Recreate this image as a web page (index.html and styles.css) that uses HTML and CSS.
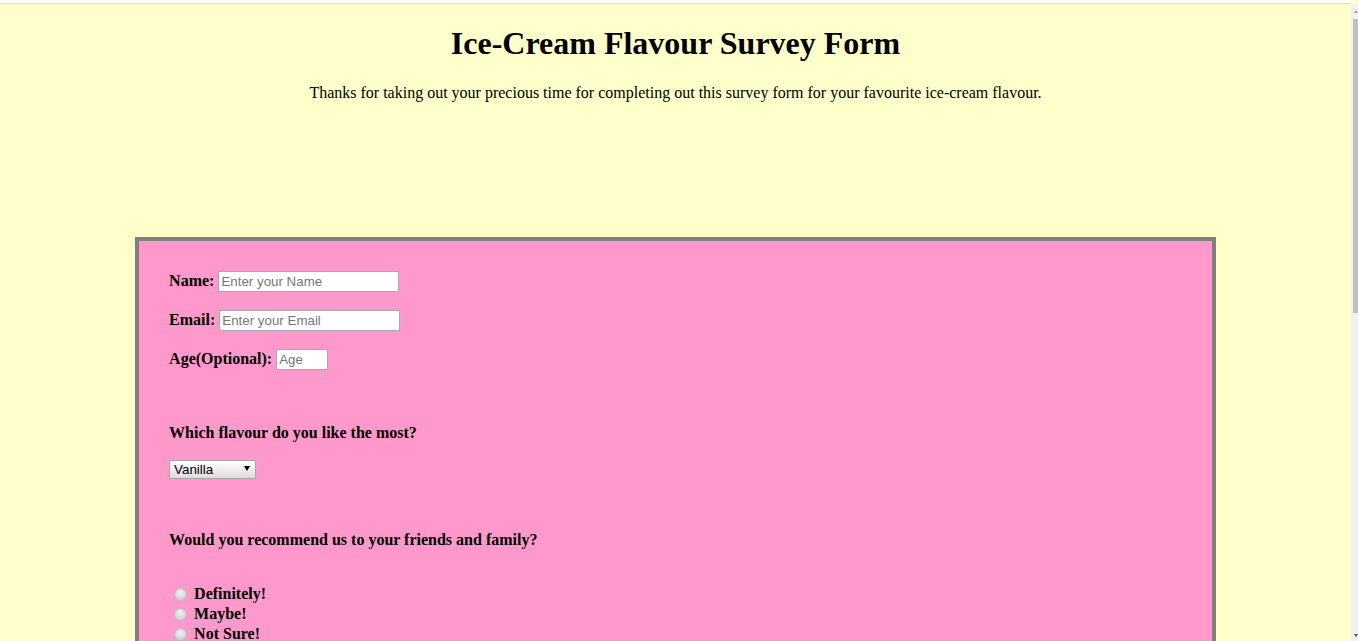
FILE: index.html
```html
<!DOCTYPE html>
<html lang="en">
<head>
<meta charset="utf-8">
<title>Ice-Cream Flavour Survey Form</title>
<link rel="stylesheet" href="styles.css">
</head>
<body>
<div class="topbar"></div>
<header class="intro">
  <h1 class="title" id="title">Ice-Cream Flavour Survey Form</h1>
  <p class="lead" id="description">Thanks for taking out your precious time for completing out this survey form for your favourite ice-cream flavour.</p>
</header>
<form class="survey" id="survey-form">
  <div class="fields">
    <div class="field">
      <label class="field-label" for="name" id="name-label">Name:</label>
      <input class="text-input input-name" type="text" id="name" placeholder="Enter your Name">
    </div>
    <div class="field">
      <label class="field-label" for="email" id="email-label">Email:</label>
      <input class="text-input input-email" type="email" id="email" placeholder="Enter your Email">
    </div>
    <div class="field">
      <label class="field-label" for="number" id="number-label">Age(Optional):</label>
      <input class="text-input input-age" type="number" id="number" placeholder="Age">
    </div>
  </div>

  <div class="question q-flavour">
    <p class="q-label">Which flavour do you like the most?</p>
    <span class="select-wrap">
      <select class="flavour-select" id="dropdown">
        <option>Vanilla</option>
        <option>Chocolate</option>
        <option>Strawberry</option>
        <option>Butterscotch</option>
      </select>
    </span>
  </div>

  <div class="question q-recommend">
    <p class="q-label">Would you recommend us to your friends and family?</p>
    <div class="radio-list">
      <label class="radio-row"><input class="radio" type="radio" name="recommend" value="definitely"><span>Definitely!</span></label>
      <label class="radio-row"><input class="radio" type="radio" name="recommend" value="maybe"><span>Maybe!</span></label>
      <label class="radio-row"><input class="radio" type="radio" name="recommend" value="not-sure"><span>Not Sure!</span></label>
    </div>
  </div>

  <div class="question q-toppings">
    <p class="q-label">Which toppings do you like with your ice-cream?</p>
    <div class="radio-list">
      <label class="radio-row"><input class="check" type="checkbox" value="nuts"><span>Nuts</span></label>
      <label class="radio-row"><input class="check" type="checkbox" value="sprinkles"><span>Sprinkles</span></label>
      <label class="radio-row"><input class="check" type="checkbox" value="syrup"><span>Chocolate Syrup</span></label>
      <label class="radio-row"><input class="check" type="checkbox" value="fruits"><span>Fruits</span></label>
    </div>
  </div>

  <div class="question q-comments">
    <p class="q-label">Any comments or suggestions?</p>
    <textarea class="comments" placeholder="Enter your comment here..."></textarea>
  </div>

  <div class="question q-submit">
    <button class="submit" type="submit" id="submit">Submit</button>
  </div>
</form>
<div class="fake-scrollbar" aria-hidden="true"><div class="fake-thumb"></div></div>
</body>
</html>
```

FILE: styles.css
```css
html {
  background: #ffffcc;
}

body {
  margin: 0 7px 0 0;
  padding-bottom: 60px;
  font-family: "Liberation Serif", "Times New Roman", serif;
  color: #000;
  background: #ffffcc;
}

.topbar {
  height: 3px;
  margin-right: -7px;
  background: #ffffff;
  border-bottom: 1px solid #dadada;
}

.fake-scrollbar {
  position: fixed;
  top: 4px;
  right: 0;
  bottom: 0;
  width: 7px;
  background: #f1f1f1;
}
.fake-scrollbar::before,
.fake-scrollbar::after {
  content: "";
  position: absolute;
  left: 3px;
  width: 0;
  height: 0;
  border-left: 2px solid transparent;
  border-right: 2px solid transparent;
}
.fake-scrollbar::before {
  top: 6px;
  border-bottom: 3px solid #a3a3a3;
}
.fake-scrollbar::after {
  bottom: 4px;
  border-top: 3px solid #505050;
}
.fake-thumb {
  margin: 15px 0 0 2px;
  width: 5px;
  height: 294px;
  background: #c1c1c1;
}

.intro {
  text-align: center;
}

.title {
  font-size: 32px;
  font-weight: bold;
  margin: 21.44px 0;
}

.lead {
  font-size: 16px;
  margin: 16px 0;
}

.survey {
  box-sizing: border-box;
  width: 80%;
  margin: 135px auto 0;
  border: 4px solid #808080;
  background: #ff99cc;
  padding: 30px 30px 60px;
  display: flex;
  flex-direction: column;
}

.fields {
  display: flex;
  flex-direction: column;
  gap: 18px;
}

.field {
  display: flex;
  align-items: center;
  gap: 4px;
  height: 21px;
}

.field-label,
.q-label,
.radio-row {
  font-size: 16px;
  font-weight: bold;
}

.field-label {
  line-height: 18px;
}

.text-input {
  box-sizing: border-box;
  height: 21px;
  border: 1px solid #a9a9a9;
  padding: 1px 2px;
  margin: 0;
  font-family: "Liberation Sans", Arial, sans-serif;
  font-size: 13.33px;
  background: #fff;
  border-radius: 0;
  outline: none;
}
.text-input::placeholder {
  color: #777;
}
.input-name,
.input-email {
  width: 181px;
}
.input-age {
  width: 52px;
  -moz-appearance: textfield;
}
.input-age::-webkit-inner-spin-button,
.input-age::-webkit-outer-spin-button {
  -webkit-appearance: none;
  margin: 0;
}

.question {
  display: flex;
  flex-direction: column;
  align-items: flex-start;
}

.q-label {
  margin: 0;
  line-height: 18px;
}

.q-flavour {
  margin-top: 54px;
}

.select-wrap {
  position: relative;
  display: block;
  margin-top: 18px;
}
.select-wrap::after {
  content: "";
  position: absolute;
  right: 6px;
  top: 6px;
  width: 0;
  height: 0;
  border-left: 3px solid transparent;
  border-right: 3px solid transparent;
  border-top: 5px solid #000;
  pointer-events: none;
}

.flavour-select {
  -webkit-appearance: none;
  appearance: none;
  box-sizing: border-box;
  display: block;
  width: 87px;
  height: 19px;
  margin: 0;
  padding: 0 0 0 4px;
  border: 1px solid #a6a6a6;
  border-radius: 2px;
  background: linear-gradient(#ffffff, #dcdcdc);
  font-family: "Liberation Sans", Arial, sans-serif;
  font-size: 13.33px;
  color: #000;
}

.q-recommend {
  margin-top: 52px;
}

.radio-list {
  margin-top: 35px;
  display: flex;
  flex-direction: column;
}

.radio-row {
  display: flex;
  align-items: center;
  gap: 4px;
  height: 20px;
  line-height: 20px;
}

.radio,
.check {
  -webkit-appearance: none;
  appearance: none;
  box-sizing: border-box;
  width: 13px;
  height: 13px;
  margin: 2px 3px 0 5px;
  border: 1px solid #bdbdbd;
  background: radial-gradient(circle at 50% 35%, #f2f2f2 0%, #d6d6d6 60%, #c4c4c4 100%);
}
.radio {
  border-radius: 50%;
}
.check {
  border-radius: 2px;
}

.q-toppings {
  margin-top: 52px;
}

.q-comments {
  margin-top: 52px;
}

.comments {
  margin-top: 18px;
  width: 400px;
  height: 120px;
  border: 1px solid #a9a9a9;
  font-family: "Liberation Sans", Arial, sans-serif;
  font-size: 13.33px;
  padding: 4px;
  resize: none;
}

.q-submit {
  margin-top: 40px;
}

.submit {
  font-family: "Liberation Sans", Arial, sans-serif;
  font-size: 13.33px;
  padding: 2px 10px;
  border: 1px solid #a6a6a6;
  border-radius: 2px;
  background: linear-gradient(#ffffff, #dcdcdc);
}
```
